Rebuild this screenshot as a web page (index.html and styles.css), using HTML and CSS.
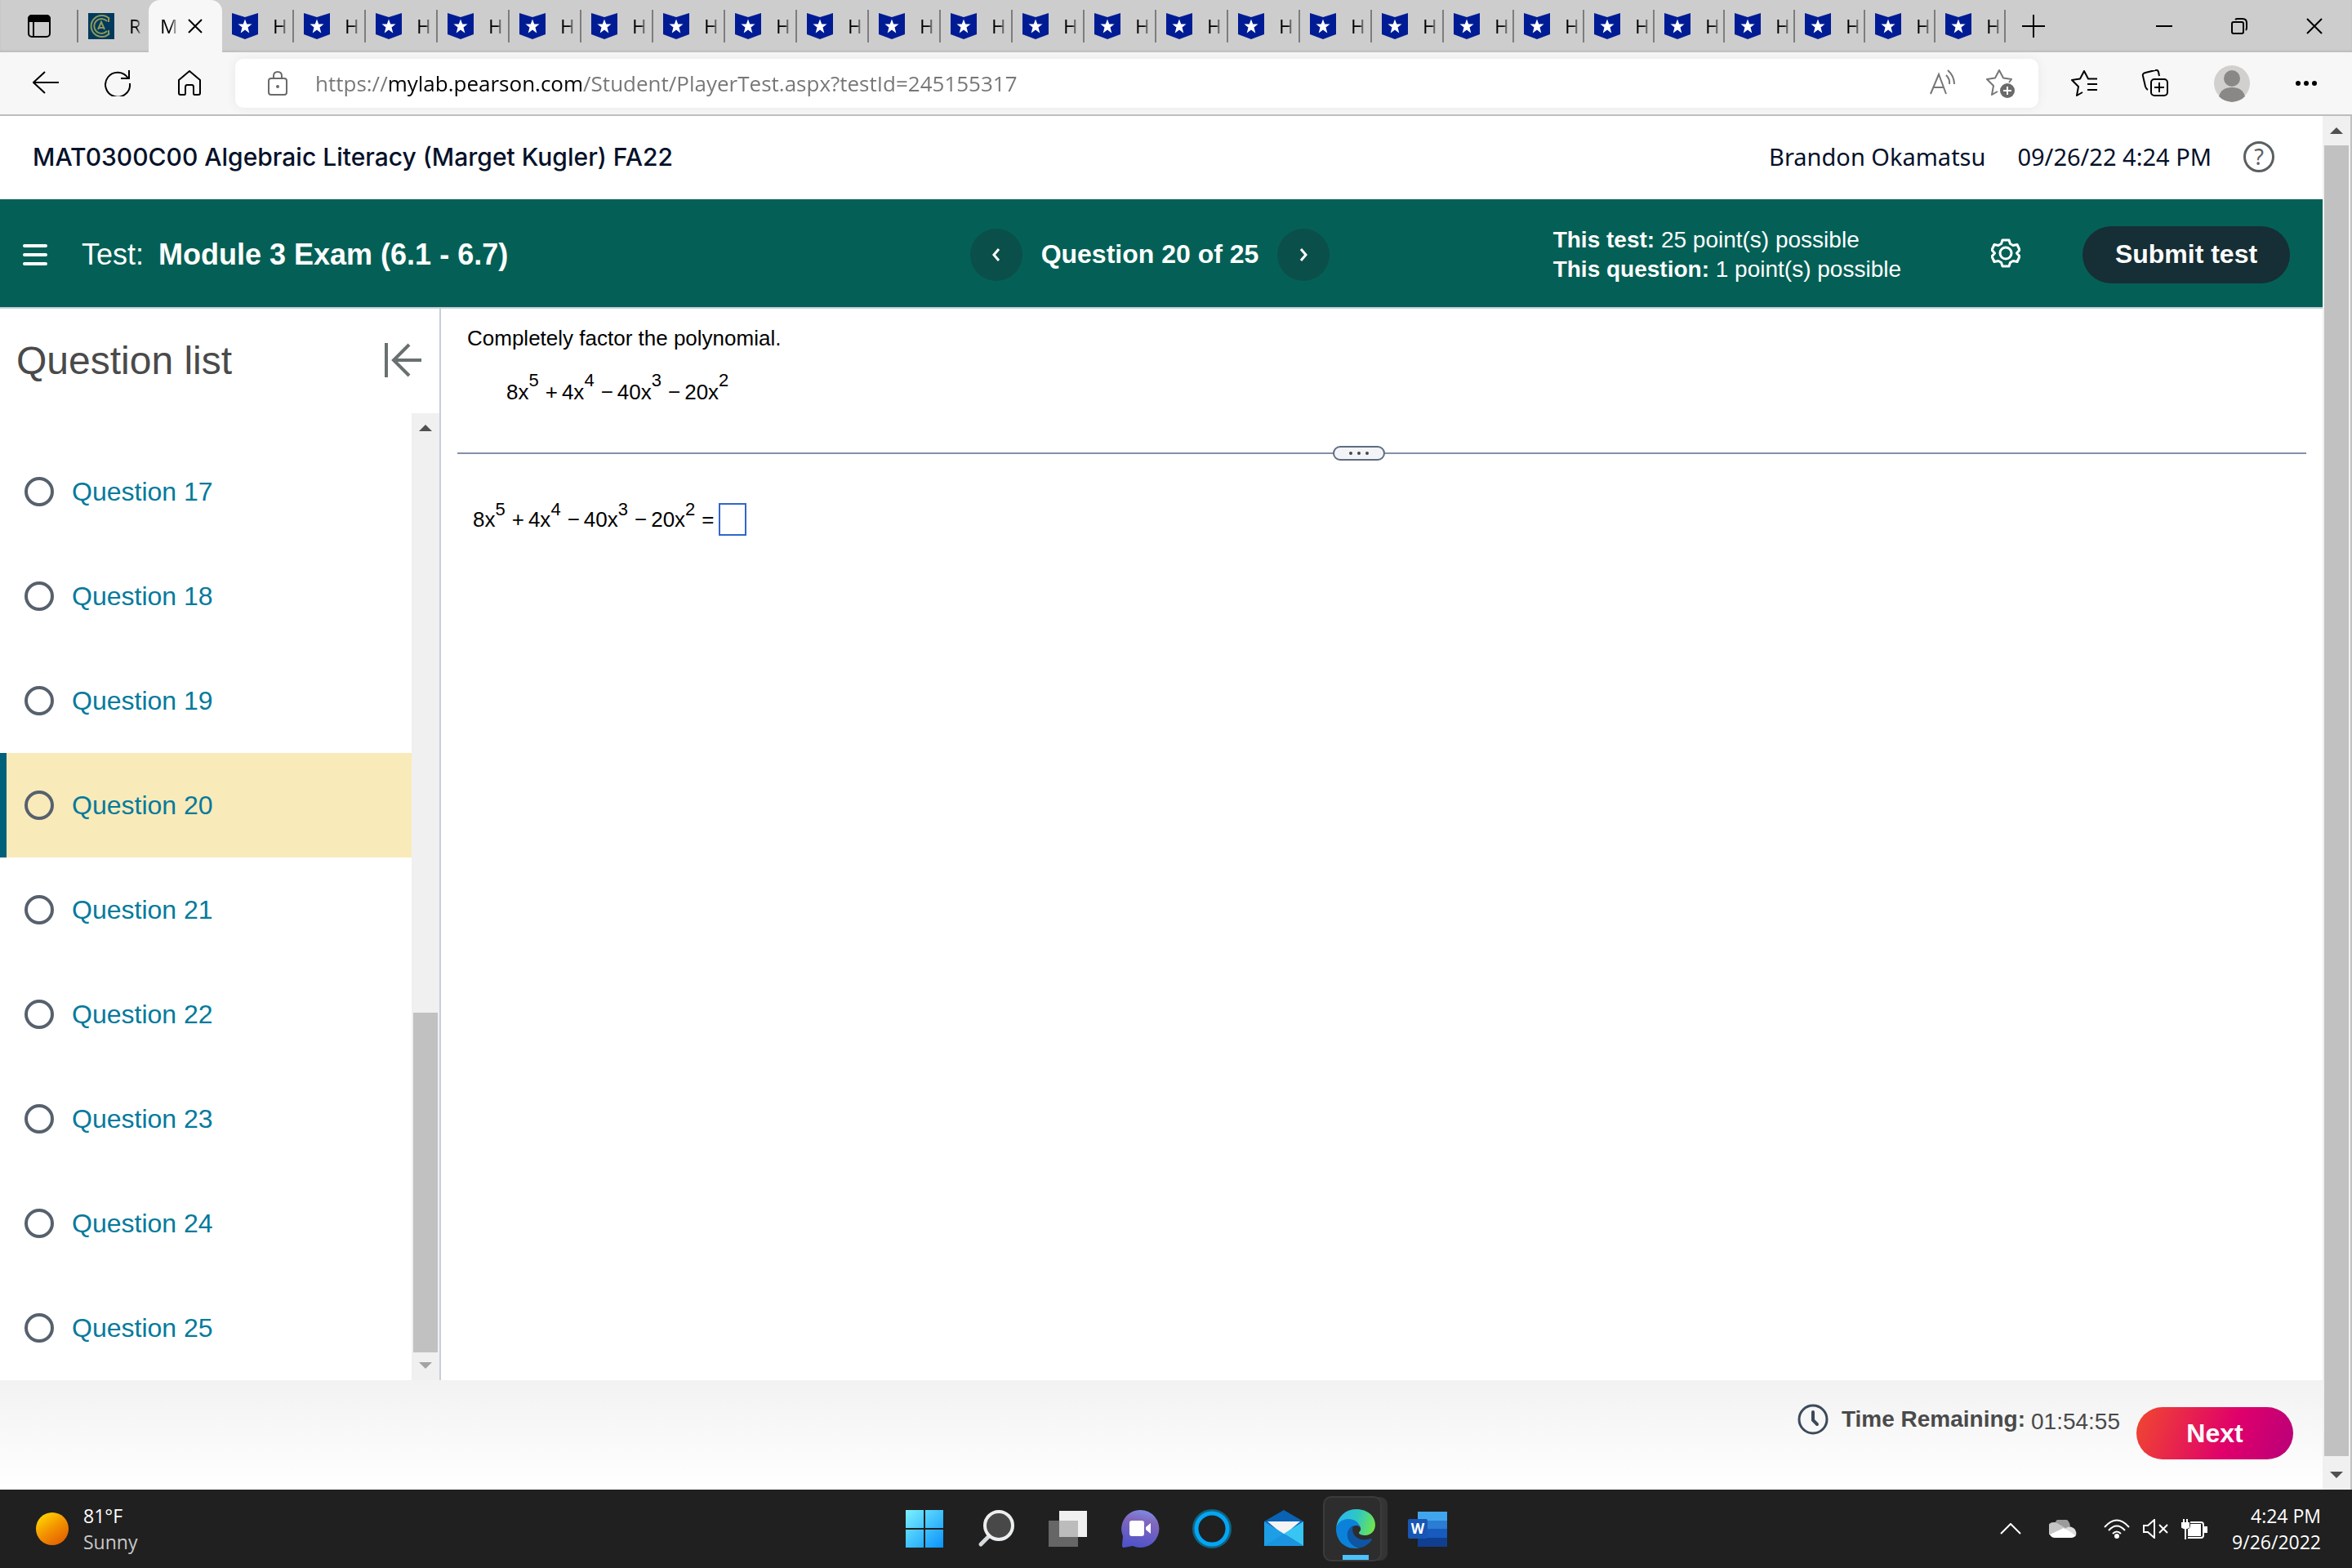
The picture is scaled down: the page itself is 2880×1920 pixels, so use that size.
FILE: index.html
```html
<!DOCTYPE html>
<html lang="en">
<head>
<meta charset="utf-8">
<meta name="viewport" content="width=device-width, initial-scale=1">
<title>Module 3 Exam</title>
<link rel="stylesheet" href="styles.css">
</head>
<body>
<svg class="defs" aria-hidden="true">
  <symbol id="shield" viewBox="0 0 32 32"><path fill="#001c94" d="M0 0 16 5 32 0V26L16 32 0 26Z"/><path fill="#fff" d="M16 7.500l2.200 6h6.300l-5 4 1.800 7-5.300-4-5.300 4 1.800-7-5-4h6.300z"/></symbol>
</svg>

<header class="tabs" id="tabs">
  <button class="tab-menu" aria-label="Tab actions"><svg width="28" height="28" viewBox="0 0 28 28" fill="none" stroke="#000" stroke-width="2"><rect x="1" y="1" width="26" height="26" rx="4"/><path fill="#000" d="M1 8V5a4 4 0 0 1 4-4h18a4 4 0 0 1 4 4v3zM7 8v19"/></svg></button>
  <div class="tab tab-first"><svg width="32" height="32" viewBox="0 0 32 32" fill="none"><path fill="#003a5d" d="M0 0h32v32H0z"/><g stroke="#8d985c"><path stroke-width="2" d="M26 7a13 13 0 1 0 0 18"/><path stroke-width="2" d="M23 10a9 9 0 1 0 0 12M25 5v6M25 21v6"/><path stroke-width="2" d="M12 20l4-9 4 9M13 18h7"/></g></svg><span class="tab-label">R</span></div>
  <div class="tab-active"><span class="tab-label">M</span><button aria-label="Close tab"><svg width="18" height="18" viewBox="0 0 18 18" stroke="#000" stroke-width="2"><path d="M1 1l16 16M17 1L1 17"/></svg></button></div>
  <div class="tab"><svg width="32" height="32"><use href="#shield"/></svg><span class="tab-label">H</span></div>
  <div class="tab"><svg width="32" height="32"><use href="#shield"/></svg><span class="tab-label">H</span></div>
  <div class="tab"><svg width="32" height="32"><use href="#shield"/></svg><span class="tab-label">H</span></div>
  <div class="tab"><svg width="32" height="32"><use href="#shield"/></svg><span class="tab-label">H</span></div>
  <div class="tab"><svg width="32" height="32"><use href="#shield"/></svg><span class="tab-label">H</span></div>
  <div class="tab"><svg width="32" height="32"><use href="#shield"/></svg><span class="tab-label">H</span></div>
  <div class="tab"><svg width="32" height="32"><use href="#shield"/></svg><span class="tab-label">H</span></div>
  <div class="tab"><svg width="32" height="32"><use href="#shield"/></svg><span class="tab-label">H</span></div>
  <div class="tab"><svg width="32" height="32"><use href="#shield"/></svg><span class="tab-label">H</span></div>
  <div class="tab"><svg width="32" height="32"><use href="#shield"/></svg><span class="tab-label">H</span></div>
  <div class="tab"><svg width="32" height="32"><use href="#shield"/></svg><span class="tab-label">H</span></div>
  <div class="tab"><svg width="32" height="32"><use href="#shield"/></svg><span class="tab-label">H</span></div>
  <div class="tab"><svg width="32" height="32"><use href="#shield"/></svg><span class="tab-label">H</span></div>
  <div class="tab"><svg width="32" height="32"><use href="#shield"/></svg><span class="tab-label">H</span></div>
  <div class="tab"><svg width="32" height="32"><use href="#shield"/></svg><span class="tab-label">H</span></div>
  <div class="tab"><svg width="32" height="32"><use href="#shield"/></svg><span class="tab-label">H</span></div>
  <div class="tab"><svg width="32" height="32"><use href="#shield"/></svg><span class="tab-label">H</span></div>
  <div class="tab tab-narrow"><svg width="32" height="32"><use href="#shield"/></svg><span class="tab-label">H</span></div>
  <div class="tab tab-narrow"><svg width="32" height="32"><use href="#shield"/></svg><span class="tab-label">H</span></div>
  <div class="tab tab-narrow"><svg width="32" height="32"><use href="#shield"/></svg><span class="tab-label">H</span></div>
  <div class="tab tab-narrow"><svg width="32" height="32"><use href="#shield"/></svg><span class="tab-label">H</span></div>
  <div class="tab tab-narrow"><svg width="32" height="32"><use href="#shield"/></svg><span class="tab-label">H</span></div>
  <div class="tab tab-narrow"><svg width="32" height="32"><use href="#shield"/></svg><span class="tab-label">H</span></div>
  <div class="tab tab-narrow"><svg width="32" height="32"><use href="#shield"/></svg><span class="tab-label">H</span></div>
  <div class="tab tab-narrow"><svg width="32" height="32"><use href="#shield"/></svg><span class="tab-label">H</span></div>
  <button class="tab-new" aria-label="New tab"><svg width="28" height="28" viewBox="0 0 28 28" stroke="#000" stroke-width="2"><path d="M14 0v28M0 14h28"/></svg></button>
  <div class="window-buttons">
    <button aria-label="Minimize"><svg width="20" height="20" viewBox="0 0 20 20" stroke="#000" stroke-width="2"><path d="M0 10h20"/></svg></button>
    <button aria-label="Restore"><svg width="20" height="20" viewBox="0 0 20 20" fill="none" stroke="#000" stroke-width="2"><rect x="1" y="5" width="14" height="14" rx="2"/><path d="M5 2q1-1 3-1h6q5 0 5 5v6q0 2-1 3"/></svg></button>
    <button aria-label="Close"><svg width="20" height="20" viewBox="0 0 20 20" stroke="#000" stroke-width="2"><path d="M1 1l18 18M19 1L1 19"/></svg></button>
  </div>
</header>

<nav class="toolbar" aria-label="Browser">
  <div class="nav-buttons">
    <button aria-label="Back"><svg width="32" height="32" viewBox="0 0 32 32" fill="none" stroke="#000" stroke-width="2"><path d="M32 15H1M15 2L1 15l14 13"/></svg></button>
    <button aria-label="Refresh"><svg width="32" height="32" viewBox="0 0 32 32" fill="none" stroke="#000" stroke-width="2"><path d="M29 10A15 15 0 1 0 31 16M30 0v10H20"/></svg></button>
    <button aria-label="Home"><svg width="32" height="32" viewBox="0 0 32 32" fill="none" stroke="#000" stroke-width="2" stroke-linejoin="round"><path d="M3 12L16 1l13 11v16q0 2-2 2h-5q-1 0-1-2v-7q0-3-2-3h-6q-2 0-2 3v7q0 2-1 2H5q-2 0-2-2z"/></svg></button>
  </div>
  <div class="address">
    <svg width="24" height="32" viewBox="0 0 24 32" fill="none" stroke="#6a6a6a" stroke-width="2"><rect x="1" y="10" width="22" height="20" rx="3"/><path d="M7 10V7q0-5 5-5t5 5v3"/><circle cx="12" cy="20" r="2" fill="#6a6a6a" stroke="none"/></svg>
    <input class="url" type="text" aria-label="Address" value="https://mylab.pearson.com/Student/PlayerTest.aspx?testId=245155317">
    <button aria-label="Read aloud"><svg width="34" height="34" viewBox="0 0 34 34" fill="none" stroke="#767676" stroke-width="2"><path d="M2 30L12 6l9 24M6 22h12"/><path d="M21 7q5 5 4 11M23 1q8 7 8 17"/></svg></button>
    <button aria-label="Add to favorites"><svg width="36" height="36" viewBox="0 0 36 36" fill="none" stroke="#767676" stroke-width="2" stroke-linejoin="round"><path d="M14 28l-7 4 2-11-8-8 10-1.500L16 2l5 9.500L31 13l-3 4"/><circle cx="26" cy="27" r="9" fill="#6a6a6a" stroke="none"/><path stroke="#fff" d="M26 22v10M21 27h10"/></svg></button>
  </div>
  <div class="tool-buttons">
    <button aria-label="Favorites"><svg width="32" height="32" viewBox="0 0 32 32" fill="none" stroke="#000" stroke-width="2" stroke-linejoin="round"><path d="M14 27l-7 4 2-11-8-8 10-1.500L16 1l5 9.500h11M20 17h12M20 24h12"/></svg></button>
    <button aria-label="Collections"><svg width="34" height="34" viewBox="0 0 34 34" fill="none" stroke="#000" stroke-width="2"><rect x="12" y="12" width="20" height="20" rx="4"/><path d="M22 16v12M16 22h12M8 25q-2-1-3-4L2 8q-1-3 3-4l12-3q3-1 4 2l1 5"/></svg></button>
    <button aria-label="Profile"><svg width="46" height="46" viewBox="0 0 46 46"><circle cx="23" cy="23" r="22" fill="#d2d0ce"/><circle cx="23" cy="17" r="10" fill="#8a8886"/><path fill="#8a8886" d="M7 39q3-11 16-11t16 11a22 22 0 0 1-32 0z"/></svg></button>
    <button aria-label="More"><svg width="28" height="8" viewBox="0 0 28 8"><circle cx="4" cy="4" r="3"/><circle cx="14" cy="4" r="3"/><circle cx="24" cy="4" r="3"/></svg></button>
  </div>
</nav>

<div class="viewport">
  <div class="page">
    <header class="course">
      <h1>MAT0300C00 Algebraic Literacy (Marget Kugler) FA22</h1>
      <span>Brandon Okamatsu</span>
      <span>09/26/22 4:24 PM</span>
      <button class="help" aria-label="Help">?</button>
    </header>
    <div class="testbar">
      <div class="test-title">
        <button aria-label="Menu"><svg width="30" height="26" viewBox="0 0 30 26" stroke="#fff" stroke-width="4" stroke-linecap="round"><path d="M2 2h26M2 13h26M2 24h26"/></svg></button>
        <span>Test:</span><strong>Module 3 Exam (6.1 - 6.7)</strong>
      </div>
      <div class="pager">
        <button aria-label="Previous question"><svg width="10" height="16" viewBox="0 0 10 16" fill="none" stroke="#fff" stroke-width="3"><path d="M8 1L2 8l6 7"/></svg></button>
        <strong>Question 20 of 25</strong>
        <button aria-label="Next question"><svg width="10" height="16" viewBox="0 0 10 16" fill="none" stroke="#fff" stroke-width="3"><path d="M2 1l6 7-6 7"/></svg></button>
      </div>
      <div class="test-side">
        <p class="points"><b>This test:</b> 25 point(s) possible<br><b>This question:</b> 1 point(s) possible</p>
        <button class="settings" aria-label="Settings"><svg width="36" height="36" viewBox="0 0 36 36" fill="none" stroke="#fff" stroke-width="3" stroke-linejoin="round"><path d="M14 2h8l1.500 4.500 3.500 2L32 7.500l3 6.500-3.500 4 3.500 4-3 6.500-5-1-3.500 2L22 34h-8l-1.500-4.500-3.500-2-5 1L1 22l3.500-4L1 14l3-6.500 5 1 3.500-2z"/><circle cx="18" cy="18" r="7"/></svg></button>
        <button class="submit">Submit test</button>
      </div>
    </div>
    <div class="work">
      <aside class="sidebar">
        <div class="sidebar-head">
          <h2>Question list</h2>
          <button aria-label="Collapse list"><svg width="46" height="42" viewBox="0 0 46 42" fill="none" stroke="#6a7070" stroke-width="4"><path d="M2 0v42M45 21H11M30 2L11 21l19 19"/></svg></button>
        </div>
        <div class="list-area">
          <ul class="questions">
            <li><a href="#q17"><i class="status"></i>Question 17</a></li>
            <li><a href="#q18"><i class="status"></i>Question 18</a></li>
            <li><a href="#q19"><i class="status"></i>Question 19</a></li>
            <li class="current"><a href="#q20"><i class="status"></i>Question 20</a></li>
            <li><a href="#q21"><i class="status"></i>Question 21</a></li>
            <li><a href="#q22"><i class="status"></i>Question 22</a></li>
            <li><a href="#q23"><i class="status"></i>Question 23</a></li>
            <li><a href="#q24"><i class="status"></i>Question 24</a></li>
            <li><a href="#q25"><i class="status"></i>Question 25</a></li>
          </ul>
          <div class="scrollbar list-scroll">
            <svg class="arrow" width="16" height="8" viewBox="0 0 16 8"><path fill="#505050" d="M8 0l8 8H0z"/></svg>
            <div class="thumb"></div>
            <svg class="arrow" width="16" height="8" viewBox="0 0 16 8"><path fill="#a3a3a3" d="M0 0h16L8 8z"/></svg>
          </div>
        </div>
      </aside>
      <main class="exercise">
        <p class="prompt">Completely factor the polynomial.</p>
        <p class="math given">8x<sup>5</sup><span class="op">+</span>4x<sup>4</sup><span class="op">−</span>40x<sup>3</sup><span class="op">−</span>20x<sup>2</sup></p>
        <div class="divider"><button aria-label="Resize panes"><svg width="24" height="4" viewBox="0 0 24 4" fill="#474747"><circle cx="2" cy="2" r="2"/><circle cx="12" cy="2" r="2"/><circle cx="22" cy="2" r="2"/></svg></button></div>
        <p class="math answer"><label for="answer">8x<sup>5</sup><span class="op">+</span>4x<sup>4</sup><span class="op">−</span>40x<sup>3</sup><span class="op">−</span>20x<sup>2</sup><span class="op">=</span></label><input id="answer" type="text"></p>
      </main>
    </div>
    <footer class="actions">
      <svg width="38" height="38" viewBox="0 0 38 38" fill="none" stroke="#3b4a5a" stroke-width="3"><circle cx="19" cy="19" r="17"/><path stroke-width="4" stroke-linecap="round" d="M19 10v10l5 5"/></svg>
      <strong>Time Remaining:</strong><span class="time">01:54:55</span>
      <button class="next">Next</button>
    </footer>
  </div>
  <div class="scrollbar page-scroll">
    <svg class="arrow" width="16" height="8" viewBox="0 0 16 8"><path fill="#505050" d="M8 0l8 8H0z"/></svg>
    <div class="thumb"></div>
    <svg class="arrow" width="16" height="8" viewBox="0 0 16 8"><path fill="#505050" d="M0 0h16L8 8z"/></svg>
  </div>
</div>

<footer class="taskbar">
  <button class="weather"><i class="sun"></i><span>81°F<br><span class="muted">Sunny</span></span></button>
  <div class="apps">
    <button aria-label="Start"><svg width="48" height="48" viewBox="0 0 48 48"><defs><linearGradient id="win" x1="0" y1="0" x2="48" y2="48" gradientUnits="userSpaceOnUse"><stop stop-color="#7df3ff"/><stop offset="1" stop-color="#0791fb"/></linearGradient></defs><path fill="url(#win)" d="M1 1h22v22H1zM25 1h22v22H25zM1 25h22v22H1zM25 25h22v22H25z"/></svg></button>
    <button aria-label="Search"><svg width="48" height="48" viewBox="0 0 48 48" fill="none"><path stroke="#d5dadd" stroke-width="5" stroke-linecap="round" d="M14 34L5 43"/><circle cx="27" cy="20" r="17" fill="#484848" stroke="#eceeef" stroke-width="4"/></svg></button>
    <button aria-label="Task view"><svg width="48" height="48" viewBox="0 0 48 48"><path fill="#f0f0f0" d="M13 2h34v32H13z"/><path fill="#666" d="M0 14h36v32H0z"/><path fill="#bcbcbc" d="M13 14h23v20H13z"/></svg></button>
    <button aria-label="Chat"><svg width="48" height="48" viewBox="0 0 48 48"><defs><linearGradient id="chat" x1="0.700" y1="0" x2="0.500" y2="1"><stop stop-color="#7b8ee8"/><stop offset=".3" stop-color="#8268bd"/><stop offset="1" stop-color="#5053c9"/></linearGradient></defs><path fill="url(#chat)" d="M24 1a23 23 0 1 1-9 44L4 47q-2 0-2-3l1-11A23 23 0 0 1 24 1z"/><rect x="11" y="14" width="18" height="19" rx="3" fill="#fff"/><path fill="#fff" d="M31 22l6-5v13l-6-5z"/></svg></button>
    <button aria-label="Cortana"><svg width="48" height="48" viewBox="0 0 48 48" fill="none"><circle cx="24" cy="24" r="22" stroke="#12637f" stroke-width="4"/><circle cx="24" cy="24" r="19" stroke="#03a6f4" stroke-width="5"/></svg></button>
    <button aria-label="Mail"><svg width="48" height="48" viewBox="0 0 48 48"><path fill="#0a62b5" d="M0 15L24 1l24 14v14H0z"/><path fill="#f4f4f4" d="M4 15h40L24 32z"/><path fill="#1e9fe5" d="M0 15l48 30H0z"/><path fill="#37c5f3" d="M48 15v30L24 30z"/><path fill="#168ade" d="M24 30l24 15H0z" opacity=".5"/></svg></button>
    <button aria-label="Edge"><span class="tile"><svg width="48" height="48" viewBox="0 0 48 48"><defs><linearGradient id="wave" x1="0" y1="0.400" x2="1" y2="0.600"><stop stop-color="#2bb5f0"/><stop offset=".5" stop-color="#2fc8c3"/><stop offset="1" stop-color="#70e64a"/></linearGradient></defs><path fill="url(#wave)" d="M0 23C2 8 12 0 25 0c14 0 23 9 23 19 0 8-6 13-12 13-4 0-8-1-8-3 0-1 3-3 2-6-1-5-7-8-12-8C9 15 1 20 0 23z"/><path fill="#0b82da" d="M0 24c1-7 7-12 15-12 9 0 14 6 14 10-3-4-14-2-14 9 0 10 8 17 15 16-3 1-6 1-7 1C9 48 0 37 0 24z"/><path fill="#0e56a3" d="M21 20c-6 3-8 8-7 14 2 9 9 13 17 13 6-2 11-6 13-10 0-1-1-1-2-1-13 5-25-4-21-16z"/></svg></span></button>
    <button aria-label="Word"><svg width="48" height="48" viewBox="0 0 48 48"><path fill="#41a5ee" d="M12 3h36v11H12z"/><path fill="#2b7cd3" d="M12 14h36v10H12z"/><path fill="#185abd" d="M12 24h36v11H12z"/><path fill="#103f91" d="M12 35h36v11H12z"/><rect y="12" width="24" height="24" rx="2" fill="#1756b4"/><text x="12" y="30" text-anchor="middle" font-size="17" font-weight="700" font-family="Open Sans, sans-serif" fill="#fff">W</text></svg></button>
  </div>
  <div class="tray">
    <svg width="26" height="14" viewBox="0 0 26 14" fill="none" stroke="#fff" stroke-width="2"><path d="M1 13L13 1l12 12"/></svg>
    <svg class="cloud" width="34" height="22" viewBox="0 0 34 22"><path fill="#9b9b9b" d="M6 8a10 10 0 0 1 20 0l-9 6z"/><path fill="#c6c6c6" d="M2 19A8 8 0 0 1 10 4l10 6z"/><path fill="#dedede" d="M18 12q8-7 14 0 2 4 1 7z"/><path fill="#fff" d="M1 18l17-8 15 9q-2 3-5 3H7q-4 0-6-4z"/></svg>
    <svg width="34" height="24" viewBox="0 0 34 24" fill="none" stroke="#fff" stroke-width="2"><path d="M2 10q15-17 30 0M7 14q10-11 20 0M12 18q5-5 10 0"/><circle cx="17" cy="21" r="2" fill="#fff"/></svg>
    <svg width="32" height="24" viewBox="0 0 32 24" fill="none" stroke="#fff" stroke-width="2"><path d="M1 8h5l8-7v22l-8-7H1zM20 7l10 10M30 7L20 17"/></svg>
    <svg width="32" height="26" viewBox="0 0 32 26" fill="none" stroke="#fff" stroke-width="2"><path d="M11 5h13q3 0 3 3v13q0 3-3 3H8M5 12v14"/><path fill="#fff" d="M28 11h3v6h-3zM12 8h11v13H9v-7q3-1 3-6zM1 6h8v5q-4 3-8 0zM3 1v5M7 1v5"/></svg>
    <p class="clock">4:24 PM<br>9/26/2022</p>
  </div>
</footer>
</body>
</html>
```
FILE: styles.css
```css
* { box-sizing: border-box; }

body {
  margin: 0;
  min-height: 100vh;
  display: flex;
  flex-direction: column;
  background: #fff;
  color: #000;
  font-family: "Liberation Sans", Arial, sans-serif;
}

h1, h2, p, ul { margin: 0; padding: 0; }
svg { display: block; flex: none; }
button { border: 0; padding: 0; background: none; color: inherit; font: inherit; cursor: pointer; }
.defs { position: absolute; width: 0; height: 0; }

/* Browser tabs */
.tabs {
  display: flex;
  align-items: center;
  height: 64px;
  background: #cdcdcd;
  box-shadow: inset 0 -2px 2px #bdbdbd;
  font: 24px/32px "Open Sans", sans-serif;
}
.tab-menu { flex: none; padding: 0 32px 0 34px; }
.tab {
  flex: none;
  display: flex;
  align-items: center;
  width: 88px;
  height: 40px;
  padding-left: 12px;
  gap: 18px;
  border-right: 2px solid #7d7d7d;
}
.tab-narrow { width: 86px; }
.tab-label {
  -webkit-mask-image: linear-gradient(90deg, #000 60%, transparent);
  mask-image: linear-gradient(90deg, #000 60%, transparent);
}
.tab-first { border-right: 0; border-left: 2px solid #7d7d7d; }
.tab-active {
  flex: none;
  display: flex;
  align-items: center;
  gap: 12px;
  width: 90px;
  height: 64px;
  padding-left: 14px;
  border-radius: 14px 14px 0 0;
  background: #f7f7f7;
}
.tab-new { margin-left: 20px; }
.window-buttons { display: flex; gap: 72px; margin-left: auto; padding-right: 36px; }

/* Browser toolbar */
.toolbar {
  display: flex;
  align-items: center;
  height: 78px;
  background: #f7f7f7;
  border-bottom: 2px solid #bdbdbd;
}
.nav-buttons { display: flex; gap: 56px; padding: 0 40px; }
.address {
  flex: 1;
  display: flex;
  align-items: center;
  height: 60px;
  padding: 0 28px 0 40px;
  border-radius: 10px;
  background: #fff;
  box-shadow: 0 0 12px #e8e8e8;
}
.address button { margin-left: 36px; }
.url {
  flex: 1;
  min-width: 0;
  height: 56px;
  margin-left: 34px;
  padding: 0;
  border: 0;
  outline: 0;
  font: 26px/40px "Open Sans", sans-serif;
  color: transparent;
  background: linear-gradient(90deg, #767676 90px, #000 90px 328px, #767676 328px);
  -webkit-background-clip: text;
  background-clip: text;
}
.tool-buttons { display: flex; align-items: center; gap: 54px; padding: 0 42px 0 40px; }

/* Page and scrollbars */
.viewport { flex: 1; display: flex; }
.page { flex: 1; min-width: 0; display: flex; flex-direction: column; }
.scrollbar {
  flex: none;
  display: flex;
  flex-direction: column;
  align-items: center;
  padding: 14px 0;
  background: #f0f0f0;
}
.scrollbar .thumb { width: 30px; background: #c1c1c1; }
.page-scroll { width: 36px; border-right: 2px solid #c1c1c1; }
.page-scroll .thumb { flex: 1; margin: 14px 0 19px; }
.list-scroll { width: 34px; }
.list-scroll .thumb { height: 36%; margin: auto 0 12px; }

/* Course header */
.course {
  display: flex;
  align-items: center;
  height: 102px;
  padding: 0 59px 2px 40px;
  color: #05112a;
  font: 29px/40px "Noto Sans", sans-serif;
}
.course h1 { margin-right: auto; font: 500 30px/40px Inter, sans-serif; }
.course span { margin-right: 39px; }
.help {
  width: 38px;
  height: 38px;
  border: 3px solid #5a6060;
  border-radius: 50%;
  color: #5a6060;
  font: 27px/32px "Noto Sans", sans-serif;
}

/* Test bar */
.testbar {
  display: grid;
  grid-template-columns: 1fr auto 1fr;
  align-items: center;
  height: 134px;
  padding: 3px 40px 0 12px;
  background: #046056;
  border-bottom: 2px solid #c7cedb;
  color: #fff;
}
.test-title { display: flex; align-items: center; font-size: 36px; padding-left: 16px; }
.test-title button { margin-right: 42px; }
.test-title span { margin-right: 18px; }
.pager { display: flex; align-items: center; gap: 23px; font-size: 32px; }
.pager button {
  display: flex;
  align-items: center;
  justify-content: center;
  width: 64px;
  height: 64px;
  border-radius: 50%;
  background: #0b4f4a;
}
.test-side { display: flex; align-items: center; justify-content: flex-end; }
.points { font-size: 28px; line-height: 36px; }
.settings { margin: 0 76px 4px 110px; }
.submit {
  width: 254px;
  height: 70px;
  border-radius: 35px;
  background: #162e35;
  font-size: 32px;
  font-weight: 700;
}

/* Question list */
.work { flex: 1; display: flex; }
.sidebar {
  flex: none;
  display: flex;
  flex-direction: column;
  width: 540px;
  border-right: 2px solid #c7cedb;
}
.sidebar-head {
  display: flex;
  align-items: center;
  justify-content: space-between;
  height: 128px;
  padding: 0 21px 2px 20px;
}
.sidebar h2 { color: #4a4a4a; font-size: 48px; font-weight: 400; }
.list-area { flex: 1; display: flex; }
.questions { flex: 1; padding-top: 32px; list-style: none; }
.questions a {
  display: flex;
  align-items: center;
  gap: 22px;
  height: 128px;
  padding-left: 22px;
  border-left: 8px solid transparent;
  color: #047a9c;
  font-size: 32px;
  text-decoration: none;
}
.current a { border-color: #00617b; background: #f9eaba; }
.status { width: 36px; height: 36px; border: 4px solid #56616d; border-radius: 50%; }

/* Exercise */
.exercise { flex: 1; min-width: 0; padding: 18px 20px 0; font-size: 26px; line-height: 36px; }
.prompt { padding-left: 12px; }
.math { display: flex; align-items: center; height: 40px; }
.math sup { position: relative; top: -14px; vertical-align: baseline; font-size: 22px; line-height: 0; }
.op { margin: 0 5px 0 8px; }
.given { margin: 28px 0 45px 60px; }
.divider {
  display: flex;
  align-items: center;
  justify-content: center;
  height: 20px;
  padding-right: 56px;
  background: linear-gradient(#8590a6, #8590a6) center / 100% 2px no-repeat;
}
.divider button {
  display: flex;
  align-items: center;
  justify-content: center;
  width: 64px;
  height: 18px;
  border: 2px solid #5f6d80;
  border-radius: 9px;
  background: #f3f4f8;
}
.answer { margin: 51px 0 0 19px; }
.answer input { width: 34px; height: 40px; border: 2px solid #3166cc; padding: 0; background: #fff; }

/* Timer and next */
.actions {
  display: flex;
  align-items: center;
  height: 134px;
  padding: 0 36px 4px 0;
  justify-content: flex-end;
  background: linear-gradient(#f2f2f2, #fff);
  color: #4a4a4a;
  font-size: 28px;
}
.actions strong { margin: 0 7px 0 16px; }
.actions svg, .actions strong { margin-bottom: 34px; }
.time { margin-bottom: 28px; }
.next {
  width: 192px;
  height: 64px;
  margin-left: 20px;
  border-radius: 32px;
  background: linear-gradient(110deg, #f0482f, #df006b 60%, #b8007a);
  color: #fff;
  font-size: 32px;
  font-weight: 700;
}

/* Taskbar */
.taskbar {
  display: grid;
  grid-template-columns: 1fr auto 1fr;
  align-items: center;
  height: 96px;
  background: #202020;
  color: #fff;
  font: 23px/32px "Open Sans", sans-serif;
}
.weather { display: flex; align-items: center; gap: 18px; padding-left: 44px; text-align: left; }
.sun { width: 40px; height: 40px; border-radius: 50%; background: linear-gradient(145deg, #ffd500 10%, #f39200 50%, #df5200); }
.muted { color: #c8c8c8; }
.apps { display: flex; }
.apps button { display: flex; align-items: center; justify-content: center; width: 88px; height: 96px; }
.tile {
  display: flex;
  align-items: center;
  justify-content: center;
  width: 72px;
  height: 80px;
  margin-right: 8px;
  padding-left: 8px;
  border: 2px solid #3b3b3b;
  border-radius: 10px;
  background: linear-gradient(#4cc2ff, #4cc2ff) left 22px bottom / 32px 6px no-repeat #2d2d2d;
  box-shadow: 8px 0 0 -1px #343434;
}
.tray { display: flex; align-items: center; justify-content: flex-end; padding-right: 38px; }
.cloud { margin: 0 32px 0 34px; }
.tray svg + svg:not(.cloud) { margin-right: 15px; }
.clock { min-width: 124px; text-align: right; }
```
